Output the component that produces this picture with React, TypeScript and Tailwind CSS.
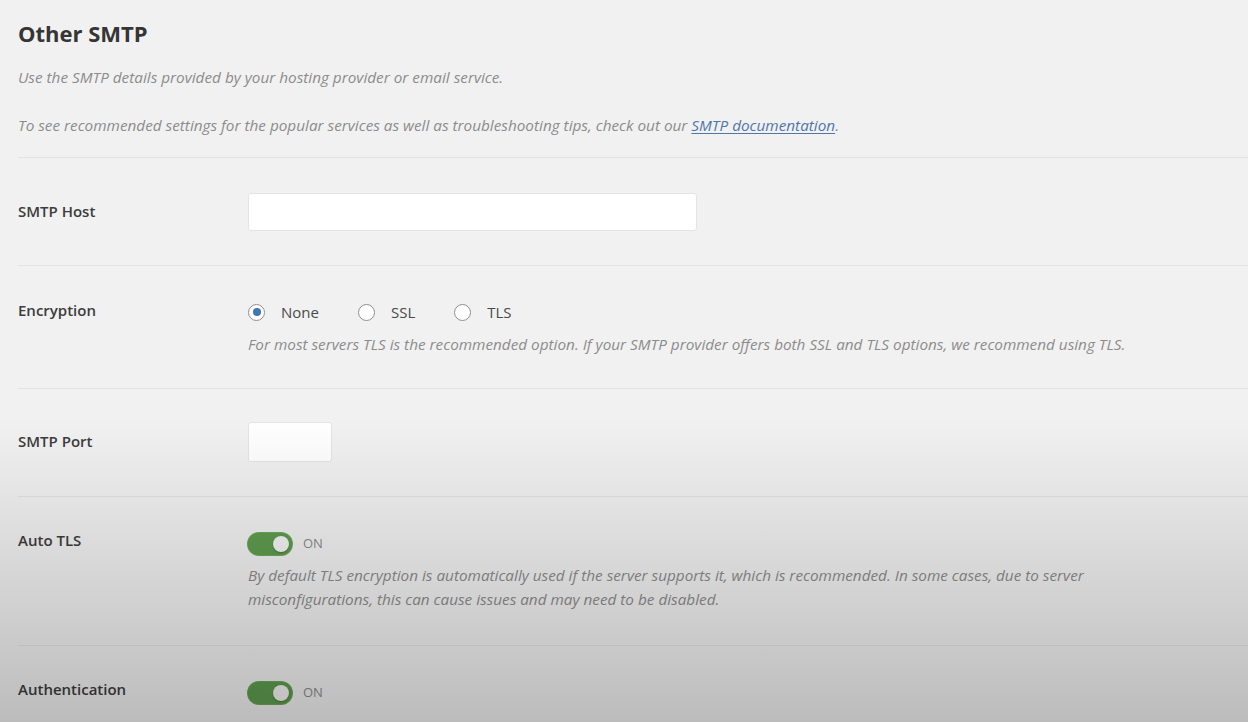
import React from "react";

const desc = "font-['Open_Sans',sans-serif] italic text-[15.3px] text-[#8c8c8c]";
const label = "font-['Open_Sans',sans-serif] font-semibold text-[15px] text-[#3c3c3c]";

function Toggle() {
  return (
    <div className="flex items-center gap-[11px]">
      <div className="flex h-[22px] w-[44px] items-center justify-end rounded-full bg-[#5e9c4e] pr-[3px] shadow-[0_0_0_1px_#6aa85a]">
        <div className="h-[16px] w-[16px] rounded-full bg-[#f4f4f4] shadow-[0_1px_2px_rgba(0,0,0,0.25)]" />
      </div>
      <span className="font-['Open_Sans',sans-serif] text-[13px] text-[#8a8a8a]">ON</span>
    </div>
  );
}

function Radio({ checked, text }: { checked?: boolean; text: string }) {
  return (
    <label className="flex items-center gap-[16px]">
      <span className="flex h-[17px] w-[17px] items-center justify-center rounded-full border border-[#8f8f8f] bg-white">
        {checked && <span className="h-[8px] w-[8px] rounded-full bg-[#3d78b5]" />}
      </span>
      <span className="font-['Open_Sans',sans-serif] text-[15px] text-[#4a4a4a]">{text}</span>
    </label>
  );
}

function Row({ name, children, labelPad = "pt-0" }: { name: string; children: React.ReactNode; labelPad?: string }) {
  return (
    <div className="flex border-b border-[#e3e3e3] py-[34px]">
      <div className={`w-[230px] shrink-0 ${labelPad} ${label}`}>{name}</div>
      <div className="flex flex-col">{children}</div>
    </div>
  );
}

export default function App() {
  return (
    <div className="relative h-[722px] w-full overflow-hidden bg-[#f1f1f1]">
      <div className="pl-[18px]">
        <div className="border-b border-[#e3e3e3] pt-[19px] pb-[22px]">
          <h2 className="font-['Open_Sans',sans-serif] text-[22px] font-bold leading-[28px] text-[#353535]">Other SMTP</h2>
          <p className={`${desc} mt-[20px] leading-[20px]`}>
            Use the SMTP details provided by your hosting provider or email service.
          </p>
          <p className={`${desc} mt-[28px] leading-[20px]`}>
            To see recommended settings for the popular services as well as troubleshooting tips, check out our{" "}
            <a className="text-[#5077ab] underline underline-offset-2">SMTP documentation</a>.
          </p>
        </div>

        <Row name="SMTP Host" labelPad="pt-[8px]">
          <div className="mt-[1px] h-[38px] w-[449px] rounded-[3px] border border-[#e4e4e4] bg-white" />
        </Row>

        <Row name="Encryption" labelPad="-mt-[1px]">
          <div className="flex h-[24px] items-center gap-[39px]">
            <Radio checked text="None" />
            <Radio text="SSL" />
            <Radio text="TLS" />
          </div>
          <p className={`${desc} mt-[10px] leading-[20px]`}>
            For most servers TLS is the recommended option. If your SMTP provider offers both SSL and TLS options, we recommend using TLS.
          </p>
        </Row>

        <Row name="SMTP Port" labelPad="pt-[7px]">
          <div className="-mt-[1px] h-[40px] w-[84px] rounded-[3px] border border-[#e4e4e4] bg-white" />
        </Row>

        <Row name="Auto TLS" labelPad="-mt-[2px]">
          <div className="pt-[2px]">
            <Toggle />
          </div>
          <p className={`${desc} mt-[8px] leading-[24px]`}>
            By default TLS encryption is automatically used if the server supports it, which is recommended. In some cases, due to server
            <br />
            misconfigurations, this can cause issues and may need to be disabled.
          </p>
        </Row>

        <Row name="Authentication" labelPad="-mt-[2px]">
          <div className="pt-[2px]">
            <Toggle />
          </div>
        </Row>
      </div>
      <div className="pointer-events-none absolute inset-0 bg-linear-to-b from-transparent from-[58%] to-black/[0.22]" />
    </div>
  );
}
